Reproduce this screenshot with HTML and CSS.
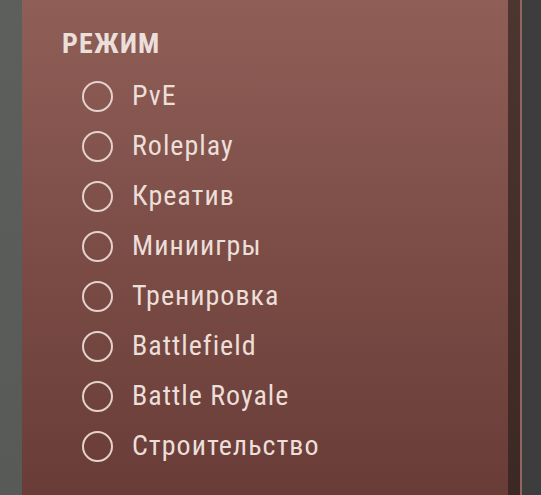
FILE: index.html
```html
<!DOCTYPE html>
<html lang="ru">
<head>
<meta charset="utf-8">
<link rel="stylesheet" href="styles.css">
</head>
<body>
<div class="page">
  <div class="strip-left"></div>
  <section class="panel">
    <h2 class="title">РЕЖИМ</h2>
    <ul class="options">
      <li class="option"><span class="radio"></span><span class="label">PvE</span></li>
      <li class="option"><span class="radio"></span><span class="label">Roleplay</span></li>
      <li class="option"><span class="radio"></span><span class="label">Креатив</span></li>
      <li class="option"><span class="radio"></span><span class="label">Миниигры</span></li>
      <li class="option"><span class="radio"></span><span class="label">Тренировка</span></li>
      <li class="option"><span class="radio"></span><span class="label">Battlefield</span></li>
      <li class="option"><span class="radio"></span><span class="label">Battle Royale</span></li>
      <li class="option"><span class="radio"></span><span class="label">Строительство</span></li>
    </ul>
  </section>
  <div class="strip-dark"></div>
  <div class="strip-line"></div>
  <div class="strip-right"></div>
</div>
</body>
</html>
```
FILE: styles.css
```css
html, body {
  margin: 0;
  padding: 0;
  height: 100%;
}
body {
  background: #3c3c3c;
  font-family: "Roboto Condensed", "Roboto", "DejaVu Sans Condensed", sans-serif;
  font-stretch: condensed;
}
.page {
  display: flex;
  height: 495px;
  width: 541px;
}
.strip-left {
  width: 22px;
  background: linear-gradient(#5c5f5c, #575a57);
}
.panel {
  width: 486px;
  background: linear-gradient(#8f5e57, #693c37);
  box-sizing: border-box;
  padding: 30px 0 0 40px;
}
.strip-dark {
  width: 12px;
  background: linear-gradient(#4d3530, #3c2824);
}
.strip-line {
  width: 2px;
  background: #94645f;
}
.strip-right {
  flex: 1;
  background: #3d3d3d;
}
.title {
  margin: 0;
  font-size: 28px;
  font-weight: 700;
  color: #eadfd9;
  line-height: 28px;
  letter-spacing: 1.2px;
}
.options {
  list-style: none;
  margin: 13px 0 0 0;
  padding: 0 0 0 20px;
}
.option {
  display: flex;
  align-items: center;
  height: 50px;
}
.radio {
  width: 27px;
  height: 27px;
  border: 2px solid #e3d3cc;
  border-radius: 50%;
  flex: none;
}
.label {
  margin-left: 19px;
  font-size: 28px;
  line-height: 32px;
  letter-spacing: 1px;
  color: #ecdfd9;
}
```
